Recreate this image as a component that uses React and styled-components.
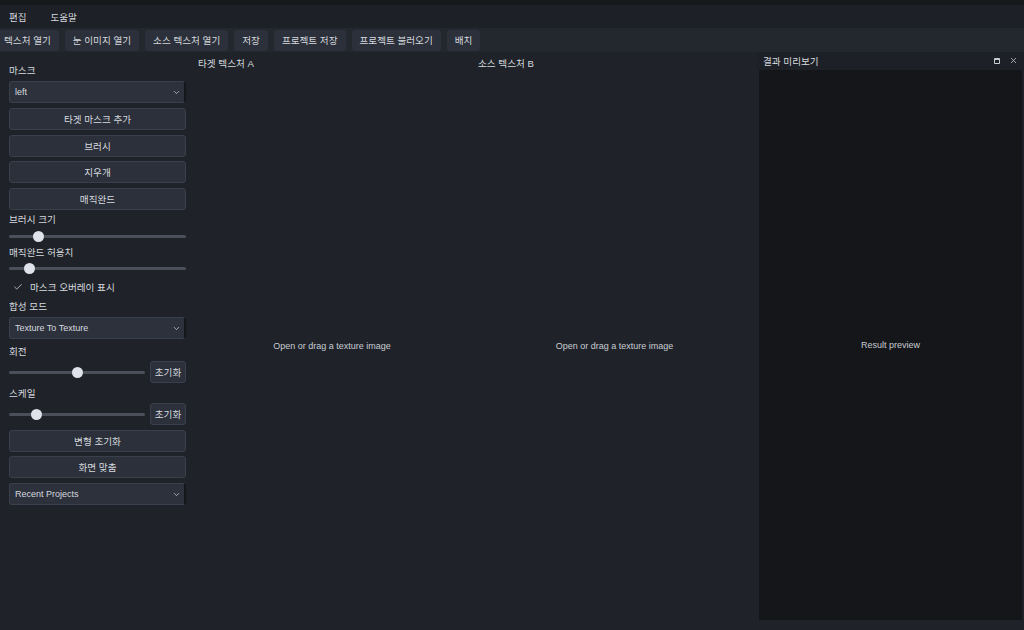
import React from 'react';
import styled, { createGlobalStyle } from 'styled-components';
import { Check, ChevronDown, X } from 'lucide-react';

const GlobalStyle = createGlobalStyle`
  html, body { margin: 0; padding: 0; background: #1f2329; }
  body {
    font-family: "Liberation Sans", "Noto Sans CJK KR", sans-serif;
    font-size: 9.6px;
    color: #d6d9df;
  }
  * { box-sizing: border-box; }
`;

const Window = styled.div`
  width: 1024px;
  height: 630px;
  display: flex;
  flex-direction: column;
  overflow: hidden;
  background: #1f2329;
`;

const TopStrip = styled.div`
  height: 5px;
  background: #17181b;
`;

const MenuBar = styled.div`
  height: 23px;
  display: flex;
  align-items: center;
  gap: 24px;
  padding-left: 9px;
  background: #1d2026;
  font-size: 9.5px;
`;

const Toolbar = styled.div`
  height: 24px;
  display: flex;
  align-items: center;
  gap: 6px;
  margin-left: -4px;
  background: #23272e;
`;

const ToolButton = styled.div`
  height: 21px;
  padding: 0 8px;
  display: flex;
  align-items: center;
  background: #2b303a;
  border-radius: 3px;
  white-space: nowrap;
`;

const Main = styled.div`
  flex: 1;
  display: flex;
  min-height: 0;
`;

const Sidebar = styled.div`
  width: 192px;
  padding: 12px 6px 0 9px;
  display: flex;
  flex-direction: column;
`;

const Label = styled.div`
  height: 12px;
  line-height: 14px;
  margin-top: ${p => p.$mt || 0}px;
  white-space: nowrap;
`;

const Button = styled.div`
  height: 22px;
  flex: ${p => (p.$small ? '0 0 36px' : 'none')};
  margin-top: ${p => p.$mt || 0}px;
  display: flex;
  align-items: center;
  justify-content: center;
  background: #2b303a;
  border: 1px solid #3a404b;
  border-radius: 3px;
`;

const Combo = styled.div`
  height: 22px;
  margin-top: ${p => p.$mt || 0}px;
  display: flex;
  align-items: center;
  justify-content: space-between;
  padding: 0 3px 0 5px;
  background: #2c313c;
  border: 1px solid #3a404b;
  border-right: 2px solid #15171b;
  border-radius: 3px;
  font-size: 9px;
  svg { color: #c8ccd4; }
`;

const SliderRow = styled.div`
  height: ${p => (p.$withButton ? 22 : 12)}px;
  margin-top: ${p => p.$mt || 0}px;
  display: flex;
  align-items: center;
  gap: 5px;
`;

const Track = styled.div`
  position: relative;
  flex: 1;
  height: 3px;
  background: #4a4f5a;
  border-radius: 2px;
`;

const Handle = styled.div`
  position: absolute;
  top: 50%;
  width: 11px;
  height: 11px;
  margin: -5.5px 0 0 -5.5px;
  border-radius: 50%;
  background: #dfe2ea;
`;

const CheckRow = styled.div`
  height: 14px;
  margin-top: ${p => p.$mt || 0}px;
  display: flex;
  align-items: center;
  gap: 7px;
  padding-left: 4px;
`;

const Canvas = styled.div`
  flex: 1;
  display: flex;
`;

const Panel = styled.div`
  flex: ${p => (p.$fixed ? `0 0 ${p.$fixed}px` : '1')};
  display: flex;
  flex-direction: column;
  padding-bottom: 10px;
`;

const PanelTitle = styled.div`
  height: 20px;
  padding: 7px 0 0 6px;
  line-height: 10px;
`;

const PanelBody = styled.div`
  flex: 1;
  display: flex;
  align-items: center;
  justify-content: center;
  color: #c9ccd2;
  font-size: 9px;
`;

const Dock = styled.div`
  width: 267px;
  display: flex;
  flex-direction: column;
  padding-bottom: 10px;
`;

const DockTitle = styled.div`
  height: 18px;
  display: flex;
  align-items: center;
  justify-content: space-between;
  padding: 0 6px 1px 6px;
  background: #1d2026;
`;

const DockIcons = styled.div`
  display: flex;
  align-items: center;
  gap: 9px;
  color: #c8ccd4;
`;

const FloatIcon = styled.div`
  width: 6px;
  height: 6px;
  border: 1.5px solid #c8ccd4;
  border-top-width: 2.5px;
  border-radius: 1px;
`;

const DockBody = styled.div`
  flex: 1;
  margin: 0 2px 0 2px;
  display: flex;
  align-items: center;
  justify-content: center;
  background: #14161a;
  color: #c9ccd2;
  font-size: 9px;
`;

const Slider = ({ pos, withButton, mt }) => (
  <SliderRow $withButton={withButton} $mt={mt}>
    <Track>
      <Handle style={{ left: `${pos}%` }} />
    </Track>
    {withButton && <Button $small>초기화</Button>}
  </SliderRow>
);

const tools = ['텍스처 열기', '눈 이미지 열기', '소스 텍스처 열기', '저장', '프로젝트 저장', '프로젝트 불러오기', '배치'];

export default function App() {
  return (
    <Window>
      <GlobalStyle />
      <TopStrip />
      <MenuBar>
        <span>편집</span>
        <span>도움말</span>
      </MenuBar>
      <Toolbar>
        {tools.map(t => <ToolButton key={t}>{t}</ToolButton>)}
      </Toolbar>
      <Main>
        <Sidebar>
          <Label>마스크</Label>
          <Combo $mt={5}>left<ChevronDown size={9} strokeWidth={2} /></Combo>
          <Button $mt={5}>타겟 마스크 추가</Button>
          <Button $mt={4.5}>브러시</Button>
          <Button $mt={4.5}>지우개</Button>
          <Button $mt={4.5}>매직완드</Button>
          <Label $mt={3.5}>브러시 크기</Label>
          <Slider pos={16.5} mt={5} />
          <Label $mt={4}>매직완드 허용치</Label>
          <Slider pos={11.3} mt={4} />
          <CheckRow $mt={6}>
            <Check size={10} strokeWidth={2} color="#c8ccd4" />
            마스크 오버레이 표시
          </CheckRow>
          <Label $mt={6}>합성 모드</Label>
          <Combo $mt={5}>Texture To Texture<ChevronDown size={9} strokeWidth={2} /></Combo>
          <Label $mt={6}>회전</Label>
          <Slider pos={50} withButton mt={4} />
          <Label $mt={4}>스케일</Label>
          <Slider pos={20.5} withButton mt={4} />
          <Button $mt={5}>변형 초기화</Button>
          <Button $mt={4}>화면 맞춤</Button>
          <Combo $mt={5}>Recent Projects<ChevronDown size={9} strokeWidth={2} /></Combo>
        </Sidebar>
        <Canvas>
          <Panel $fixed={280}>
            <PanelTitle>타겟 텍스처 A</PanelTitle>
            <PanelBody>Open or drag a texture image</PanelBody>
          </Panel>
          <Panel>
            <PanelTitle>소스 텍스처 B</PanelTitle>
            <PanelBody>Open or drag a texture image</PanelBody>
          </Panel>
        </Canvas>
        <Dock>
          <DockTitle>
            <span>결과 미리보기</span>
            <DockIcons>
              <FloatIcon />
              <X size={9} strokeWidth={2} />
            </DockIcons>
          </DockTitle>
          <DockBody>Result preview</DockBody>
        </Dock>
      </Main>
    </Window>
  );
}
